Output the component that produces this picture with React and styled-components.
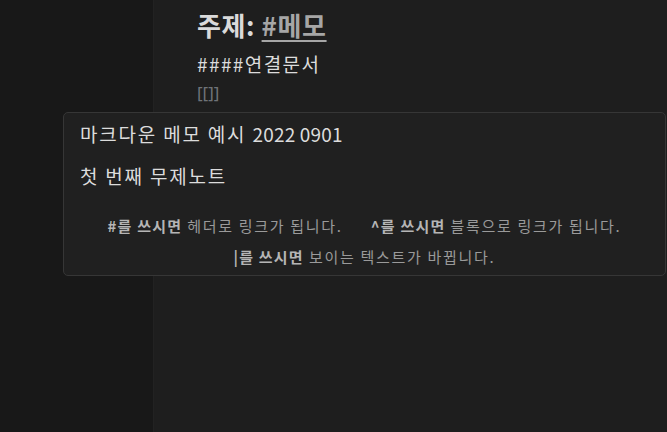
import React from 'react';
import styled, { createGlobalStyle } from 'styled-components';

const GlobalStyle = createGlobalStyle`
  html, body {
    margin: 0;
    padding: 0;
    background: #1e1e1e;
    font-family: 'Noto Sans CJK KR', 'Noto Sans', sans-serif;
  }
`;

const Page = styled.div`
  position: relative;
  display: flex;
  width: 667px;
  height: 432px;
  overflow: hidden;
`;

const Sidebar = styled.div`
  width: 153px;
  flex-shrink: 0;
  background: #181818;
  border-right: 1px solid #222;
`;

const Editor = styled.div`
  flex: 1;
  background: #1e1e1e;
  padding: 5px 0 0 43px;
  display: flex;
  flex-direction: column;
`;

const Heading = styled.div`
  font-size: 26px;
  font-weight: 700;
  color: #dadada;
  line-height: 40px;
  letter-spacing: 0.6px;
`;

const Tag = styled.span`
  color: #a6a6a6;
  text-decoration: underline;
  text-decoration-thickness: 2px;
  text-underline-offset: 4px;
`;

const Line = styled.div`
  font-size: 19px;
  color: #dcdcdc;
  line-height: 28px;
  margin-top: 5px;
  letter-spacing: 1.4px;
`;

const Brackets = styled.div`
  font-size: 17px;
  color: #6f7378;
  line-height: 22px;
  margin-top: 4px;
  font-family: 'Noto Sans', sans-serif;
`;

const Popup = styled.div`
  position: absolute;
  left: 63px;
  top: 112px;
  width: 603px;
  height: 164px;
  box-sizing: border-box;
  background: #202020;
  border: 1px solid #363636;
  border-radius: 5px;
  padding: 6px 16px 0 16px;
  display: flex;
  flex-direction: column;
`;

const Suggestion = styled.div`
  font-size: 19px;
  color: #dcdcdc;
  line-height: 30px;
  letter-spacing: 1.8px;
  margin-bottom: ${({ gap }) => gap}px;
`;

const Num = styled.span`
  letter-spacing: 0.2px;
`;

const Hints = styled.div`
  margin-top: 24px;
  display: flex;
  flex-direction: column;
  align-items: center;
  gap: 9px;
  font-size: 15px;
  color: #9a9a9a;
  line-height: 22px;
  letter-spacing: 1.7px;
`;

const HintRow = styled.div`
  display: flex;
  gap: 28px;
`;

const Key = styled.b`
  color: #b5b5b5;
  font-weight: 700;
  letter-spacing: 1.2px;
`;

export default function App() {
  return (
    <>
      <GlobalStyle />
      <Page>
        <Sidebar />
        <Editor>
          <Heading>
            주제: <Tag>#메모</Tag>
          </Heading>
          <Line>####연결문서</Line>
          <Brackets>[[]]</Brackets>
        </Editor>
        <Popup>
          <Suggestion gap={12}>마크다운 메모 예시 <Num>2022 0901</Num></Suggestion>
          <Suggestion gap={0}>첫 번째 무제노트</Suggestion>
          <Hints>
            <HintRow>
              <span><Key>#를 쓰시면</Key> 헤더로 링크가 됩니다.</span>
              <span><Key>^를 쓰시면</Key> 블록으로 링크가 됩니다.</span>
            </HintRow>
            <HintRow>
              <span><Key>|를 쓰시면</Key> 보이는 텍스트가 바뀝니다.</span>
            </HintRow>
          </Hints>
        </Popup>
      </Page>
    </>
  );
}
